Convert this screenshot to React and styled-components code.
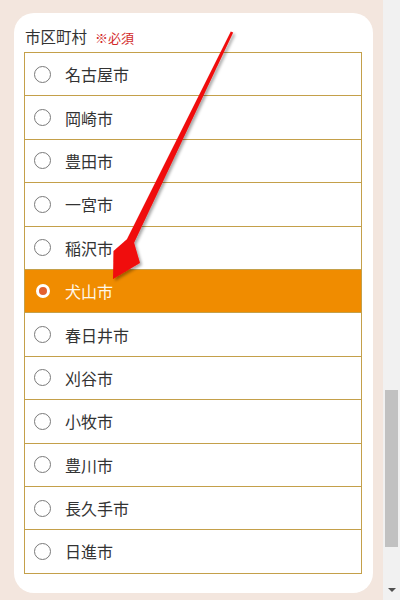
import React from 'react';
import styled, { createGlobalStyle } from 'styled-components';

const GlobalStyle = createGlobalStyle`
  html, body {
    margin: 0;
    padding: 0;
    background: #f3e6de;
    font-family: "Noto Sans CJK JP", "Noto Sans", sans-serif;
    color: #333;
  }
`;

const Page = styled.div`
  position: relative;
  display: flex;
  width: 400px;
  height: 600px;
  overflow: hidden;
`;

const Main = styled.div`
  flex: 1;
  padding: 13px 10px 0 14px;
`;

const Card = styled.div`
  background: #fff;
  border-radius: 20px;
  padding: 13px 11px 19px 10px;
`;

const Label = styled.div`
  display: flex;
  align-items: baseline;
  gap: 8px;
  height: 20px;
  line-height: 20px;
  margin: 0 0 6px 1px;
  font-size: 15.5px;
  color: #333;

  .required{
      font-size: 13px;
      color: #d22a2a;
  }
`;

const List = styled.div`
  border: 1px solid #c4a04a;
`;

const Row = styled.label`
  display: flex;
  align-items: center;
  gap: 14px;
  height: 42.4px;
  padding-left: 9px;
  font-size: 16px;
  background: ${p => (p.$checked ? '#f08c00' : '#fff')};
  color: ${p => (p.$checked ? '#fff8ea' : '#333')};
  & + & {
      border-top: 1px solid #c4a04a;
  }
`;

const Radio = styled.span`
  display: flex;
  align-items: center;
  justify-content: center;
  width: 17px;
  height: 17px;
  flex-shrink: 0;
  box-sizing: border-box;
  border-radius: 50%;
  border: ${p => (p.$checked ? 'none' : '1px solid #7a7a7a')};
  background: ${p => (p.$checked ? 'transparent' : '#fff')};
`;

const RadioDot = styled.span`
  width: 14px;
  height: 14px;
  box-sizing: border-box;
  border-radius: 50%;
  background: #e3602e;
  border: 3px solid #fff;
`;

const ScrollTrack = styled.div`
  display: flex;
  flex-direction: column;
  align-items: center;
  width: 17px;
  background: #f1f1f1;
`;

const ScrollThumb = styled.div`
  width: 13px;
  height: 157px;
  margin-top: 390px;
  background: #c1c1c1;
`;

const ScrollArrow = styled.div`
  margin-top: auto;
  margin-bottom: 8px;
  width: 0;
  height: 0;
  border-left: 4px solid transparent;
  border-right: 4px solid transparent;
  border-top: 4px solid #505050;
`;

const Overlay = styled.svg`
  position: absolute;
  top: 0;
  left: 0;
  pointer-events: none;
`;

const cities = ['名古屋市', '岡崎市', '豊田市', '一宮市', '稲沢市', '犬山市', '春日井市', '刈谷市', '小牧市', '豊川市', '長久手市', '日進市'];

const App = () => {
    const selected = '犬山市';
    return (
        <Page>
            <GlobalStyle />
            <Main>
                <Card>
                    <Label>市区町村<span className='required'>※必須</span></Label>
                    <List>
                        {cities.map(c => (
                            <Row key={c} $checked={c === selected}>
                                <Radio $checked={c === selected}>{c === selected && <RadioDot />}</Radio>
                                {c}
                            </Row>
                        ))}
                    </List>
                </Card>
            </Main>
            <ScrollTrack>
                <ScrollThumb />
                <ScrollArrow />
            </ScrollTrack>
            <Overlay width="400" height="600" viewBox="0 0 400 600">
                <defs>
                    <filter id="shadow" x="-20%" y="-20%" width="140%" height="140%">
                        <feDropShadow dx="2" dy="2" stdDeviation="1.5" floodColor="#000" floodOpacity="0.35" />
                    </filter>
                </defs>
                <polygon
                    filter="url(#shadow)"
                    fill="#f00a0a"
                    points="233.2,32.6 134.1,242.8 140,263 113,279 113.5,251 126.9,239.3 230.8,31.4"
                />
            </Overlay>
        </Page>
    );
};

export default App;
